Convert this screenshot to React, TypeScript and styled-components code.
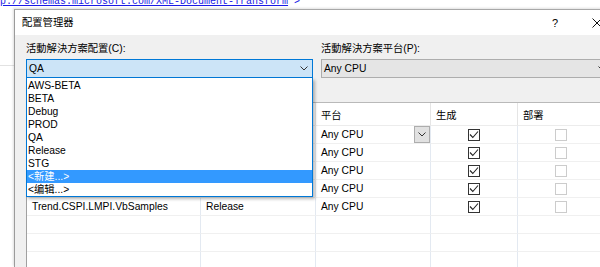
import { Fragment } from "react";
import styled, { createGlobalStyle } from "styled-components";

const GlobalStyle = createGlobalStyle`
  * { box-sizing: border-box; }
  html, body { margin: 0; padding: 0; background: #ffffff; }
  body {
    width: 600px;
    height: 267px;
    overflow: hidden;
    font-family: "Liberation Sans", "Noto Sans CJK TC", sans-serif;
    font-size: 10.3px;
    color: #000;
  }
`;

const Screen = styled.div`
  width: 600px;
  height: 267px;
  overflow: hidden;
  display: flex;
  flex-direction: column;
  background: #fff;
`;

const CodeLine = styled.div`
  height: 9px;
  flex: none;
  overflow: hidden;
  font-family: "Liberation Mono", monospace;
  font-size: 10px;
  line-height: 10px;
  color: #1a1ae6;
  white-space: pre;
`;
const CodeText = styled.div`
  margin-top: -3px;
`;
const Url = styled.span`
  text-decoration: underline;
`;

const Desktop = styled.div`
  display: flex;
  flex: 1;
  min-height: 0;
`;
const Gutter = styled.div`
  width: 14px;
  flex: none;
`;
const GutterRule = styled.div`
  height: 57px;
  border-bottom: 1px solid #e2e2e2;
`;

const Dialog = styled.div`
  width: 604px;
  flex: none;
  display: flex;
  flex-direction: column;
  border-left: 1px solid #9b9b9b;
  border-top: 1px solid #a8a8a8;
  box-shadow: -1px -1px 2px rgba(0, 0, 0, 0.12);
  background: #f0f0f0;
`;

const TitleBar = styled.div`
  height: 25px;
  flex: none;
  display: flex;
  align-items: center;
  background: #fff;
`;
const Title = styled.div`
  flex: 1;
  padding-left: 7px;
  line-height: 14px;
`;
const HelpButton = styled.div`
  width: 42px;
  text-align: center;
  font-size: 11px;
  line-height: 14px;
`;
const CloseButton = styled.div`
  width: 42px;
  display: flex;
  justify-content: center;
  align-items: center;
`;

const Body = styled.div`
  flex: 1;
  min-height: 0;
  padding: 7px 7px 0 11px;
  display: flex;
  flex-direction: column;
`;

const FieldRow = styled.div`
  display: flex;
  gap: 8px;
`;
const Field = styled.div<{ $width?: number }>`
  display: flex;
  flex-direction: column;
  gap: 3px;
  flex: ${(p) => (p.$width ? `0 0 ${p.$width}px` : "1")};
`;
const Label = styled.div`
  line-height: 14px;
  white-space: nowrap;
`;
const ComboWrap = styled.div`
  position: relative;
`;
const Combo = styled.div<{ $open?: boolean }>`
  height: 19px;
  display: flex;
  align-items: center;
  justify-content: space-between;
  padding: 0 4px 0 2px;
  border: 1px solid ${(p) => (p.$open ? "#0078d7" : "#adadad")};
  background: ${(p) => (p.$open ? "#cce4f7" : "#e5e5e5")};
  white-space: nowrap;
`;

const DropList = styled.ul`
  position: absolute;
  top: 100%;
  left: 0;
  width: 100%;
  margin: 0;
  padding: 1px 0 0;
  list-style: none;
  background: #fff;
  border: 1px solid #0078d7;
  border-top: none;
  box-shadow: 2px 2px 3px rgba(0, 0, 0, 0.28);
  z-index: 2;
`;
const DropItem = styled.li<{ $selected?: boolean }>`
  height: 13px;
  line-height: 13px;
  padding-left: 1px;
  white-space: nowrap;
  background: ${(p) => (p.$selected ? "#3399ff" : "transparent")};
  color: ${(p) => (p.$selected ? "#fff" : "#000")};
`;

const Grid = styled.div`
  margin: 24px 7px 0 0;
  display: grid;
  grid-template-columns: 174px 115px 115px 87px 1fr;
  grid-template-rows: 23px;
  grid-auto-rows: 18px;
  border-top: 1px solid #b9b9b9;
  border-left: 1px solid #a0a0a0;
  background: #fff;
`;
const HeaderCell = styled.div`
  display: flex;
  align-items: center;
  padding-left: 5px;
  border-right: 1px solid #e5e5e5;
  border-bottom: 1px solid #ececec;
  white-space: nowrap;
`;
const Cell = styled.div<{ $center?: boolean }>`
  display: flex;
  align-items: center;
  justify-content: ${(p) => (p.$center ? "center" : "flex-start")};
  padding-left: ${(p) => (p.$center ? "0" : "5px")};
  border-right: 1px solid #e3e9f1;
  border-bottom: 1px solid #f0f0f0;
  white-space: nowrap;
  overflow: hidden;
`;
const DropButton = styled.div`
  width: 16px;
  height: 17px;
  margin-left: auto;
  display: flex;
  align-items: center;
  justify-content: center;
  border: 1px solid #adadad;
  background: #e1e1e1;
`;
const Check = styled.div<{ $disabled?: boolean }>`
  width: 12px;
  height: 12px;
  display: flex;
  align-items: center;
  justify-content: center;
  border: 1px solid ${(p) => (p.$disabled ? "#cccccc" : "#333333")};
  background: #fff;
`;

function Chevron() {
  return (
    <svg width="8" height="5" viewBox="0 0 8 5">
      <polyline points="0.5,0.5 4,4 7.5,0.5" fill="none" stroke="#333" strokeWidth="1" />
    </svg>
  );
}

function CheckBox({ checked, disabled }: { checked?: boolean; disabled?: boolean }) {
  return (
    <Check $disabled={disabled}>
      {checked && (
        <svg width="10" height="10" viewBox="0 0 10 10">
          <polyline points="1,4.5 3.8,7.5 9,1.5" fill="none" stroke="#222" strokeWidth="1.1" />
        </svg>
      )}
    </Check>
  );
}

const configs = ["AWS-BETA", "BETA", "Debug", "PROD", "QA", "Release", "STG", "<新建...>", "<编辑...>"];

// rows 1-4 sit under the open dropdown, so only the last one shows its name
const projects = [
  { name: "", config: "" },
  { name: "", config: "" },
  { name: "", config: "" },
  { name: "", config: "" },
  { name: "Trend.CSPI.LMPI.VbSamples", config: "Release" },
];

export default function App() {
  return (
    <>
      <GlobalStyle />
      <Screen>
        <CodeLine>
          <CodeText>
            <Url>p://schemas.microsoft.com/XML-Document-Transform</Url>"&gt;
          </CodeText>
        </CodeLine>
        <Desktop>
          <Gutter>
            <GutterRule />
          </Gutter>
          <Dialog>
            <TitleBar>
              <Title>配置管理器</Title>
              <HelpButton>?</HelpButton>
              <CloseButton>
                <svg width="10" height="10" viewBox="0 0 10 10">
                  <path d="M0.5 0.5 L9.5 9.5 M9.5 0.5 L0.5 9.5" stroke="#111" strokeWidth="1" />
                </svg>
              </CloseButton>
            </TitleBar>
            <Body>
              <FieldRow>
                <Field $width={287}>
                  <Label>活動解決方案配置(C):</Label>
                  <ComboWrap>
                    <Combo $open>
                      <span>QA</span>
                      <Chevron />
                    </Combo>
                    <DropList>
                      {configs.map((c) => (
                        <DropItem key={c} $selected={c === "<新建...>"}>
                          {c}
                        </DropItem>
                      ))}
                    </DropList>
                  </ComboWrap>
                </Field>
                <Field>
                  <Label>活動解決方案平台(P):</Label>
                  <Combo>
                    <span>Any CPU</span>
                    <Chevron />
                  </Combo>
                </Field>
              </FieldRow>
              <Grid>
                <HeaderCell>專案</HeaderCell>
                <HeaderCell>配置</HeaderCell>
                <HeaderCell>平台</HeaderCell>
                <HeaderCell>生成</HeaderCell>
                <HeaderCell>部署</HeaderCell>
                {projects.map((p, i) => (
                  <Fragment key={i}>
                    <Cell>{p.name}</Cell>
                    <Cell>{p.config}</Cell>
                    <Cell>
                      Any CPU
                      {i === 0 && (
                        <DropButton>
                          <Chevron />
                        </DropButton>
                      )}
                    </Cell>
                    <Cell $center>
                      <CheckBox checked />
                    </Cell>
                    <Cell $center>
                      <CheckBox disabled />
                    </Cell>
                  </Fragment>
                ))}
                {[0, 1, 2].map((r) =>
                  [0, 1, 2, 3, 4].map((c) => <Cell key={`e${r}-${c}`} />)
                )}
              </Grid>
            </Body>
          </Dialog>
        </Desktop>
      </Screen>
    </>
  );
}
